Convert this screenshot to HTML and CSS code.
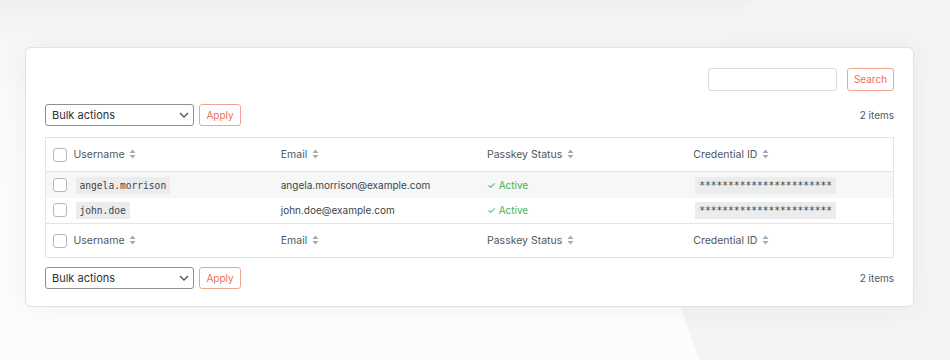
FILE: index.html
```html
<!DOCTYPE html>
<html>
<head>
<meta charset="utf-8">
<link rel="stylesheet" href="styles.css">
</head>
<body>
<div class="card">
  <div class="search-row">
    <input class="search-input" type="text">
    <button class="btn btn-search">Search</button>
  </div>
  <div class="nav-row">
    <div class="bulk">
      <div class="select">Bulk actions
        <svg class="chev" width="10" height="6" viewBox="0 0 10 6"><path d="M1 1l4 4 4-4" fill="none" stroke="#50575e" stroke-width="1.4"/></svg>
      </div>
      <button class="btn btn-apply">Apply</button>
    </div>
    <div class="count">2 items</div>
  </div>
  <table class="list">
    <colgroup>
      <col class="c-check"><col class="c-user"><col class="c-mail"><col class="c-status"><col class="c-cred">
    </colgroup>
    <thead>
      <tr class="head">
        <th class="check"><span class="box"></span></th>
        <th>Username <svg class="sort" width="7" height="10" viewBox="0 0 7 10"><path d="M3.5 0.5L6.5 4H0.5z M3.5 9.5L6.5 6H0.5z" fill="#a7aaad"/></svg></th>
        <th>Email <svg class="sort" width="7" height="10" viewBox="0 0 7 10"><path d="M3.5 0.5L6.5 4H0.5z M3.5 9.5L6.5 6H0.5z" fill="#a7aaad"/></svg></th>
        <th>Passkey Status <svg class="sort" width="7" height="10" viewBox="0 0 7 10"><path d="M3.5 0.5L6.5 4H0.5z M3.5 9.5L6.5 6H0.5z" fill="#a7aaad"/></svg></th>
        <th>Credential ID <svg class="sort" width="7" height="10" viewBox="0 0 7 10"><path d="M3.5 0.5L6.5 4H0.5z M3.5 9.5L6.5 6H0.5z" fill="#a7aaad"/></svg></th>
      </tr>
    </thead>
    <tbody>
      <tr class="row alt">
        <td class="check"><span class="box"></span></td>
        <td><code>angela.morrison</code></td>
        <td>angela.morrison@example.com</td>
        <td class="active">✓ Active</td>
        <td><code>***********************</code></td>
      </tr>
      <tr class="row">
        <td class="check"><span class="box"></span></td>
        <td><code>john.doe</code></td>
        <td>john.doe@example.com</td>
        <td class="active">✓ Active</td>
        <td><code>***********************</code></td>
      </tr>
    </tbody>
    <tfoot>
      <tr class="head foot">
        <th class="check"><span class="box"></span></th>
        <th>Username <svg class="sort" width="7" height="10" viewBox="0 0 7 10"><path d="M3.5 0.5L6.5 4H0.5z M3.5 9.5L6.5 6H0.5z" fill="#a7aaad"/></svg></th>
        <th>Email <svg class="sort" width="7" height="10" viewBox="0 0 7 10"><path d="M3.5 0.5L6.5 4H0.5z M3.5 9.5L6.5 6H0.5z" fill="#a7aaad"/></svg></th>
        <th>Passkey Status <svg class="sort" width="7" height="10" viewBox="0 0 7 10"><path d="M3.5 0.5L6.5 4H0.5z M3.5 9.5L6.5 6H0.5z" fill="#a7aaad"/></svg></th>
        <th>Credential ID <svg class="sort" width="7" height="10" viewBox="0 0 7 10"><path d="M3.5 0.5L6.5 4H0.5z M3.5 9.5L6.5 6H0.5z" fill="#a7aaad"/></svg></th>
      </tr>
    </tfoot>
  </table>
  <div class="nav-row bottom">
    <div class="bulk">
      <div class="select">Bulk actions
        <svg class="chev" width="10" height="6" viewBox="0 0 10 6"><path d="M1 1l4 4 4-4" fill="none" stroke="#50575e" stroke-width="1.4"/></svg>
      </div>
      <button class="btn btn-apply">Apply</button>
    </div>
    <div class="count">2 items</div>
  </div>
</div>
</body>
</html>
```

FILE: styles.css
```css
* { box-sizing: border-box; }
html, body { margin: 0; padding: 0; overflow: hidden; }
body {
  width: 950px;
  height: 360px;
  background:
    radial-gradient(circle 331px at 1000px 221px, #f4f4f4 99.6%, rgba(244,244,244,0) 100%),
    linear-gradient(to bottom, #f0f0f0 0px, #f7f7f7 40px, #fbfbfb 120px, #fdfdfd 360px);
  font-family: Inter, "Liberation Sans", Arial, sans-serif;
  color: #50575e;
  padding-top: 47px;
  padding-left: 25px;
}
.card {
  width: 889px;
  height: 260px;
  background: #fff;
  border: 1px solid #e2e2e2;
  border-radius: 6px;
  box-shadow: 0 0 30px rgba(0,0,0,0.05);
  padding: 20px 19px 0 19px;
}
.search-row {
  display: flex;
  justify-content: flex-end;
  gap: 10px;
  height: 23px;
}
.search-input {
  width: 129px;
  height: 23px;
  border: 1px solid #dcdcde;
  border-radius: 3px;
  margin: 0;
  padding: 0;
  background: #fff;
}
.btn {
  height: 23px;
  margin: 0;
  padding: 0 6px;
  background: #fff;
  border: 1px solid #f4a392;
  border-radius: 3px;
  color: #f0705a;
  font-family: Inter, "Liberation Sans", Arial, sans-serif;
  font-size: 10px;
  line-height: 21px;
}
.btn-search { width: 47px; padding: 0; }
.nav-row {
  display: flex;
  justify-content: space-between;
  align-items: center;
  margin-top: 13px;
  height: 22px;
}
.nav-row.bottom { margin-top: 9px; }
.bulk { display: flex; gap: 5px; align-items: center; }
.select {
  width: 149px;
  height: 22px;
  border: 1px solid #8c8f94;
  border-radius: 3px;
  font-size: 11px;
  color: #2c3338;
  line-height: 20px;
  padding-left: 6px;
  display: flex;
  justify-content: space-between;
  align-items: center;
  padding-right: 4px;
}
.btn-apply { width: 42px; height: 22px; line-height: 20px; padding: 0; }
.count { font-size: 10px; color: #50575e; }
.list {
  margin-top: 11px;
  width: 849px;
  border-collapse: collapse;
  table-layout: fixed;
  border: 1px solid #e2e4e7;
}
.c-check { width: 21px; }
.c-user { width: 207px; }
.c-mail { width: 206px; }
.c-status { width: 206px; }
.c-cred { width: 207px; }
th, td {
  text-align: left;
  padding: 0 0 0 7px;
  white-space: nowrap;
  vertical-align: middle;
}
th {
  font-weight: normal;
  font-size: 10.5px;
  color: #50575e;
  height: 34px;
}
thead tr { border-bottom: 1px solid #e2e4e7; }
tfoot tr { border-top: 1px solid #e2e4e7; }
td {
  font-size: 10px;
  color: #3c434a;
  height: 26px;
}
tr.alt td { background: #f6f7f7; }
.check { padding-left: 7px; }
.box {
  display: block;
  width: 14px;
  height: 14px;
  border: 1px solid #b5b8bc;
  border-radius: 3px;
  background: #fff;
}
.sort { vertical-align: -1px; margin-left: 2px; }
code {
  font-family: "DejaVu Sans Mono", "Liberation Mono", monospace;
  font-size: 9.6px;
  background: #ececec;
  color: #3c434a;
  padding: 3px 4px;
  margin-left: 2px;
}
.active { color: #46b450; }
```
